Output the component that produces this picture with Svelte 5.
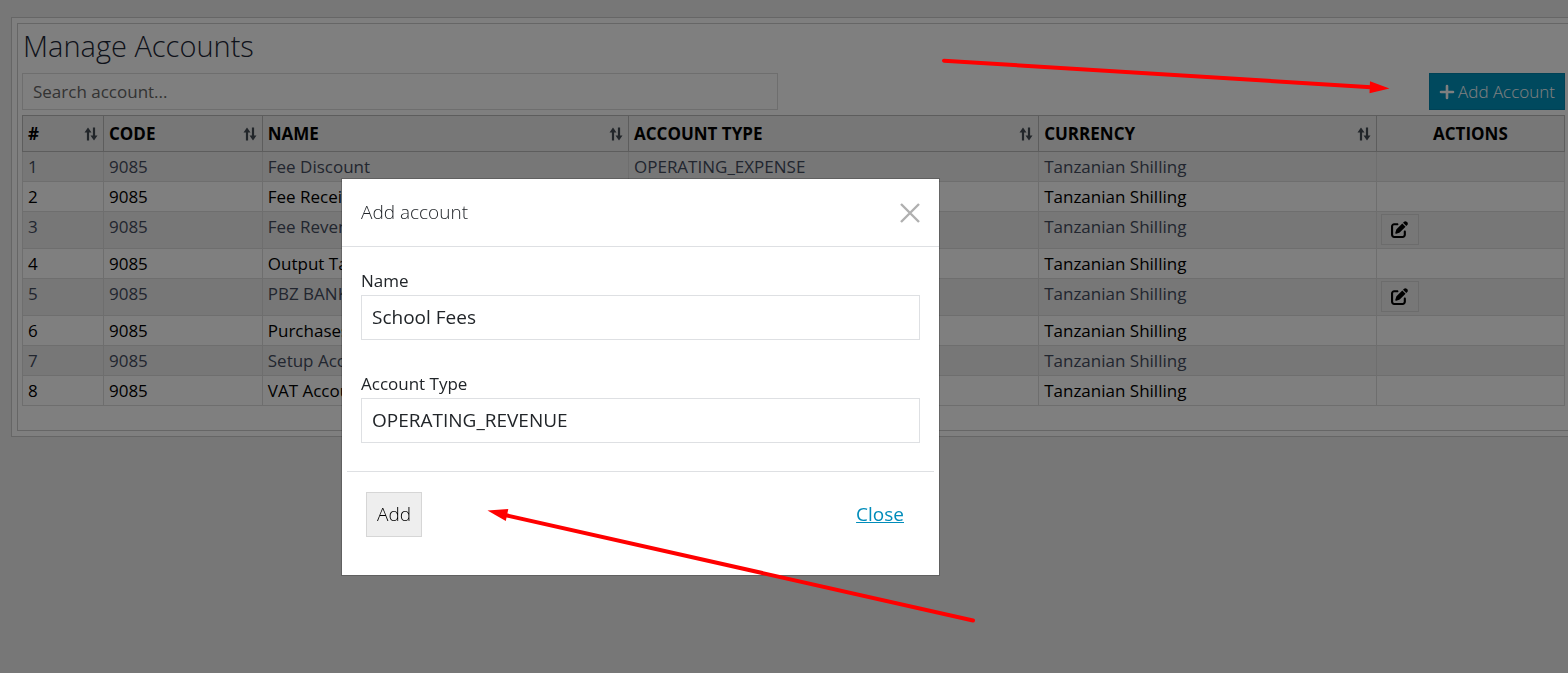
<script>
  const columns = ['#', 'CODE', 'NAME', 'ACCOUNT TYPE', 'CURRENCY'];
  const currency = 'Tanzanian Shilling';

  const accounts = [
    { id: 1, code: '9085', name: 'Fee Discount', type: 'OPERATING_EXPENSE' },
    { id: 2, code: '9085', name: 'Fee Receivable', type: '' },
    { id: 3, code: '9085', name: 'Fee Revenue', type: '', editable: true },
    { id: 4, code: '9085', name: 'Output Tax', type: '' },
    { id: 5, code: '9085', name: 'PBZ BANK', type: '', editable: true },
    { id: 6, code: '9085', name: 'Purchases', type: '' },
    { id: 7, code: '9085', name: 'Setup Account', type: '' },
    { id: 8, code: '9085', name: 'VAT Account', type: '' }
  ];

  let search = $state('');
  let name = $state('School Fees');
  let accountType = $state('OPERATING_REVENUE');
</script>

<main class="page">
  <div class="frame">
    <section class="panel">
      <h1>Manage Accounts</h1>
      <div class="toolbar">
        <input class="search" type="search" aria-label="Search account" placeholder="Search account..." bind:value={search} />
        <button class="add-account" type="button">
          <svg class="plus" viewBox="0 0 16 16" aria-hidden="true">
            <path d="M8 2v12M2 8h12" fill="none" stroke="currentColor" stroke-width="2.600" stroke-linecap="round" />
          </svg>
          Add Account
        </button>
      </div>
      <table>
        <colgroup>
          <col class="c-id" /><col class="c-code" /><col class="c-name" />
          <col class="c-type" /><col class="c-currency" /><col />
        </colgroup>
        <thead>
          <tr>
            {#each columns as column}
              <th scope="col">
                <div class="head">
                  {column}
                  <svg class="sort" viewBox="0 0 14 14" aria-hidden="true">
                    <path d="M4 13.500V4M10 0.500V10" fill="none" stroke="currentColor" stroke-width="2.200" />
                    <path d="M4 0.500L7.500 5.500H0.500ZM10 13.500L13.500 8.500H6.500Z" fill="currentColor" />
                  </svg>
                </div>
              </th>
            {/each}
            <th scope="col" class="actions">ACTIONS</th>
          </tr>
        </thead>
        <tbody>
          {#each accounts as account (account.id)}
            <tr>
              <td>{account.id}</td>
              <td>{account.code}</td>
              <td>{account.name}</td>
              <td>{account.type}</td>
              <td>{currency}</td>
              <td class="action-cell">
                {#if account.editable}
                  <button class="edit" type="button" aria-label="Edit account">
                    <svg viewBox="0 0 512 512" aria-hidden="true">
                      <path fill="currentColor" d="M471.600 21.700c-21.900-21.900-57.300-21.900-79.200 0L362.300 51.700l97.900 97.900 30.100-30.100c21.900-21.900 21.900-57.300 0-79.200L471.600 21.700zm-299.200 220c-6.100 6.100-10.800 13.600-13.500 21.900l-29.600 88.800c-2.900 8.600-.6 18.100 5.800 24.600s15.900 8.700 24.600 5.800l88.800-29.600c8.200-2.700 15.700-7.400 21.900-13.500L437.700 172.300 339.700 74.300 172.400 241.700zM96 64C43 64 0 107 0 160V416c0 53 43 96 96 96H352c53 0 96-43 96-96V320c0-17.700-14.300-32-32-32s-32 14.300-32 32v96c0 17.700-14.300 32-32 32H96c-17.700 0-32-14.300-32-32V160c0-17.700 14.300-32 32-32h96c17.700 0 32-14.300 32-32s-14.300-32-32-32H96z" />
                    </svg>
                  </button>
                {/if}
              </td>
            </tr>
          {/each}
        </tbody>
      </table>
    </section>
  </div>
</main>

<div class="backdrop">
  <div class="dialog" role="dialog" aria-modal="true" aria-labelledby="dialog-title">
    <header>
      <h2 id="dialog-title">Add account</h2>
      <button class="dismiss" type="button" aria-label="Close dialog">
        <svg viewBox="0 0 20 20" aria-hidden="true">
          <path d="M1 1l18 18M19 1L1 19" fill="none" stroke="currentColor" stroke-width="2.400" />
        </svg>
      </button>
    </header>
    <form>
      <div class="fields">
        <div class="field">
          <label for="account-name">Name</label>
          <input id="account-name" type="text" bind:value={name} />
        </div>
        <div class="field">
          <label for="account-type">Account Type</label>
          <select id="account-type" bind:value={accountType}>
            <option>OPERATING_REVENUE</option>
            <option>OPERATING_EXPENSE</option>
          </select>
        </div>
      </div>
      <footer>
        <button class="submit" type="button">Add</button>
        <a href="#close">Close</a>
      </footer>
    </form>
  </div>
</div>

<svg class="arrows" viewBox="0 0 1568 673" preserveAspectRatio="xMinYMin meet" aria-hidden="true">
  <g stroke="#f00" stroke-width="4" stroke-linecap="round">
    <path d="M944 60.700L1371 87.200" />
    <path d="M973 620.500L505 515" />
  </g>
  <path fill="#f00" d="M1389.500 88.500L1370 81.300L1369.500 93.300Z" />
  <path fill="#f00" d="M487.500 510.500L508.300 509L505.800 521Z" />
</svg>

<style>
  :global(body) {
    background: #efefef;
    font-family: 'Open Sans', sans-serif;
    font-size: 17px;
    line-height: 23px;
    color: #000;
  }

  * {
    box-sizing: border-box;
  }

  input,
  select,
  button {
    font-family: inherit;
    margin: 0;
    border-radius: 0;
  }

  .page {
    padding: 17px 0 0 11px;
  }

  .frame {
    padding: 5px 0 5px 5px;
    background: #fff;
    border: 1px solid #ccc;
    border-right: 0;
  }

  .panel {
    padding: 0 3px 24px 4px;
    border: 1px solid #ccc;
    border-right: 0;
  }

  h1 {
    margin: 0;
    padding: 2px 1px 7px;
    font-size: 29px;
    line-height: 40px;
    font-weight: 300;
    color: #1d2736;
  }

  .toolbar {
    display: flex;
    justify-content: space-between;
    margin-bottom: 5px;
  }

  .search {
    width: 49%;
    height: 37px;
    padding: 0 10px;
    border: 1px solid #dcdcdc;
    background: #fff;
    font-size: 17px;
    appearance: none;
  }

  .search::placeholder {
    color: #666;
  }

  .add-account {
    display: flex;
    align-items: center;
    gap: 3px;
    height: 37px;
    padding: 0 9px;
    border: 1px solid #0085ad;
    background: #0092bd;
    color: #fff;
    font-size: 17px;
    font-weight: 300;
  }

  .plus {
    width: 16px;
    height: 16px;
  }

  table {
    width: 100%;
    table-layout: fixed;
    border-collapse: collapse;
  }

  .c-id {
    width: 5.25%;
  }

  .c-code {
    width: 10.3%;
  }

  .c-name {
    width: 23.75%;
  }

  .c-type {
    width: 26.6%;
  }

  .c-currency {
    width: 21.9%;
  }

  th {
    height: 36px;
    padding: 0 5px;
    border: 1px solid #bbb;
    background: #efefef;
    text-align: left;
    font-weight: 700;
  }

  th.actions {
    text-align: center;
  }

  .head {
    display: flex;
    align-items: center;
    justify-content: space-between;
  }

  .sort {
    width: 14px;
    height: 14px;
    color: #444c55;
  }

  td {
    padding: 3px 5px;
    border: 1px solid #dcdcdc;
    vertical-align: top;
  }

  tbody tr:nth-child(odd) {
    background: #efefef;
    color: #444c5e;
  }

  .action-cell {
    padding: 2px 4px 3px;
  }

  .edit {
    display: grid;
    place-items: center;
    width: 38px;
    height: 31px;
    padding: 0;
    border: 1px solid #d8d8d8;
    background: #efefef;
    color: #000;
  }

  .edit svg {
    width: 17px;
    height: 17px;
  }

  .backdrop {
    position: fixed;
    inset: 0;
    padding: 179px 20px 20px 342px;
    background: rgba(0, 0, 0, 0.5);
  }

  .dialog {
    max-width: 597px;
    background: #fff;
    box-shadow: 0 0 0 1px rgba(0, 0, 0, 0.2);
    color: #212529;
  }

  header {
    display: flex;
    align-items: center;
    justify-content: space-between;
    padding: 20px 19px;
    border-bottom: 1px solid #dee0e3;
  }

  h2 {
    margin: 0;
    font-size: 19px;
    line-height: 27px;
    font-weight: 300;
  }

  .dismiss {
    display: flex;
    padding: 0;
    border: 0;
    background: none;
    color: #b0b0b0;
  }

  .dismiss svg {
    width: 20px;
    height: 20px;
  }

  .fields {
    display: grid;
    gap: 32px;
    padding: 22px 19px 28px;
  }

  .field {
    display: grid;
    gap: 3px;
  }

  .field label {
    font-size: 17px;
  }

  .field input,
  .field select {
    width: 100%;
    height: 45px;
    padding: 0 10px 2px;
    border: 1px solid #dee0e3;
    background: #fff;
    color: #212529;
    font-size: 19px;
    appearance: none;
  }

  footer {
    display: flex;
    align-items: center;
    justify-content: space-between;
    margin: 0 5px;
    padding: 20px 30px 38px 19px;
    border-top: 1px solid #dee0e3;
    font-size: 19px;
  }

  .submit {
    height: 45px;
    padding: 0 10px 2px;
    border: 1px solid #d6d6d6;
    background: #eee;
    color: #000;
    font-size: 19px;
    font-weight: 300;
  }

  a {
    color: #008cba;
  }

  .arrows {
    position: fixed;
    top: 0;
    left: 0;
    width: 100vw;
    pointer-events: none;
  }
</style>
